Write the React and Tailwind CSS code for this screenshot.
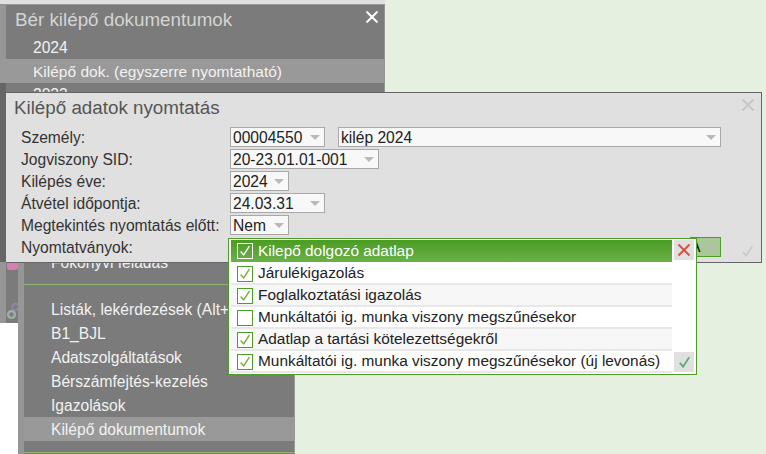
const fields = [
  { label: "Személy:", value: "00004550", width: "w-[95px]" },
  { label: "Jogviszony SID:", value: "20-23.01.01-001", width: "w-[149px]" },
  { label: "Kilépés éve:", value: "2024", width: "w-[59px]" },
  { label: "Átvétel időpontja:", value: "24.03.31", width: "w-[95px]" },
  { label: "Megtekintés nyomtatás előtt:", value: "Nem", width: "w-[59px]" },
];

const forms = [
  { name: "Járulékigazolás", checked: true },
  { name: "Foglalkoztatási igazolás", checked: true, alt: true },
  { name: "Munkáltatói ig. munka viszony megszűnésekor", checked: false },
  { name: "Adatlap a tartási kötelezettségekről", checked: true, alt: true },
  { name: "Munkáltatói ig. munka viszony megszűnésekor (új levonás)", checked: true },
];

const menu = [
  "Listák, lekérdezések (Alt+L)",
  "B1_BJL",
  "Adatszolgáltatások",
  "Bérszámfejtés-kezelés",
  "Igazolások",
];

function Caret() {
  return <span className="w-0 h-0 border-x-[5px] border-x-transparent border-t-[5px] border-t-[#b8b8b8]" />;
}

function Select({ value, width }) {
  return (
    <div className={`${width} h-5 flex items-center justify-between pl-[2px] pr-[4px] border border-[#a8a8a8] bg-[#f8f8f8] text-[#222] leading-[18px]`}>
      <span className="pt-[2px]">{value}</span>
      <Caret />
    </div>
  );
}

function Check({ className, width = 1.6 }) {
  return (
    <svg viewBox="0 0 16 16" className={className} fill="none" stroke="currentColor" strokeWidth={width}>
      <path d="M3 8.5 L6.5 12.5 L13 2.5" />
    </svg>
  );
}

function Cross({ className, width = 2 }) {
  return (
    <svg viewBox="0 0 12 12" className={className} fill="none" stroke="currentColor" strokeWidth={width}>
      <path d="M0.5 0.5 L11.5 11.5 M11.5 0.5 L0.5 11.5" />
    </svg>
  );
}

function FormRow({ name, checked, alt }) {
  return (
    <div className={`h-[22px] flex items-start gap-[5px] pl-[6px] border-b-2 border-[#e8e8e8] ${alt ? "bg-[#f7f7f7]" : "bg-white"}`}>
      <span className="w-4 h-4 mt-[3px] border border-[#4c9e25] bg-white flex items-center justify-center">
        {checked && <Check className="w-[14px] h-[14px] text-[#6cb02a]" />}
      </span>
      <span className="text-[#222] whitespace-nowrap leading-[20px] text-[15.4px]">{name}</span>
    </div>
  );
}

export default function App() {
  return (
    <div className="relative w-[766px] h-[454px] overflow-hidden bg-[#e5f0e1] font-['Liberation_Sans',Arial,sans-serif] text-[15.6px]">
      {/* bal oldali sáv */}
      <div className="absolute left-0 top-0 w-6 h-[454px] bg-white flex">
        <div className="w-[18px] h-[323px] bg-[#969696] flex justify-end">
          <div className="relative w-3 h-[323px] bg-[#7b7b7b]">
            <span className="absolute left-[1px] top-[262px] w-[11px] h-2 rounded-b-[3px] bg-[#d77fb0]" />
            <svg viewBox="0 0 12 18" className="absolute left-0 top-[302px] w-3 h-[18px]" fill="none">
              <circle cx="9.5" cy="5" r="3.2" stroke="#8f86a8" strokeWidth="2" />
              <circle cx="5.5" cy="12.5" r="3.4" stroke="#9fb0ac" strokeWidth="2.4" />
            </svg>
          </div>
        </div>
        <div className="w-[6px] h-[454px] bg-[#969696]" />
      </div>

      {/* menü ablak */}
      <div className="absolute left-6 top-[238px] w-[271px] h-[216px] bg-[#7b7b7b] border-r border-[#999] text-[#f2f2f2] pt-3">
        <div className="h-6 leading-[26px] pl-[27px]">Főkönyvi feladás</div>
        <div className="h-px mt-[10px] bg-[#8cb36f]" />
        <div className="mt-3">
          {menu.map((item) => (
            <div key={item} className="h-6 leading-[26px] pl-[27px] whitespace-nowrap">{item}</div>
          ))}
          <div className="h-6 leading-[26px] pl-[27px] bg-[#999]">Kilépő dokumentumok</div>
        </div>
        <div className="h-px mt-[11px] bg-[#8cb36f]" />
      </div>

      {/* Bér kilépő dokumentumok */}
      <div className="absolute left-0 top-0 w-[385px] h-[92px] overflow-hidden bg-[#969696] border-t-4 border-[#e0e0e0]">
        <div className="ml-[6px] w-[378px] h-[92px] bg-[#7b7b7b] border-t border-[#999] text-[#f2f2f2]">
          <div className="relative h-[30px] pl-[9px] pt-[4px] text-[18.8px] leading-[22px] text-[#d4d4d4]">
            Bér kilépő dokumentumok
            <Cross className="absolute right-[6px] top-[6px] w-3 h-3 text-white" />
          </div>
          <div className="h-6 leading-[26px] pl-[27px]">2024</div>
          <div className="-ml-[6px] w-[384px] h-6 leading-[26px] pl-[33px] bg-[#999] text-[15.5px]">Kilépő dok. (egyszerre nyomtatható)</div>
          <div className="h-6 leading-[24px] pl-[27px]">2023</div>
        </div>
      </div>

      {/* sötét sáv a párbeszédablak mellett */}
      <div className="absolute left-0 top-[83px] w-[6px] h-[179px] bg-[#666]" />

      {/* Kilépő adatok nyomtatás */}
      <div className="absolute left-[6px] top-[92px] w-[756px] h-[171px] bg-[#e0e0e0] border border-l-0 border-[#666] text-[#333]">
        <div className="relative h-[34px] pl-[8px] pt-[4px] text-[18.8px] leading-[22px] text-[#555]">
          Kilépő adatok nyomtatás
          <Cross className="absolute right-[7px] top-[6px] w-3 h-3 text-[#c8c8c8]" />
        </div>
        <div className="flex flex-col gap-[2px]">
          {fields.map((f, i) => (
            <div key={f.label} className="flex items-center h-5 pl-[15px]">
              <span className="w-[209px] whitespace-nowrap leading-[18px] pt-[2px]">{f.label}</span>
              <Select value={f.value} width={f.width} />
              {i === 0 && (
                <div className="ml-[13px]">
                  <Select value="kilép 2024" width="w-[383px]" />
                </div>
              )}
            </div>
          ))}
          <div className="flex items-center h-5 pl-[15px]">
            <span className="leading-[18px] pt-[2px]">Nyomtatványok:</span>
          </div>
        </div>
        <Check width={2} className="absolute right-[6px] bottom-[3px] w-[15px] h-[15px] text-[#ccc]" />
      </div>

      {/* zöld kijelölt mező a lista mögött */}
      <div className="absolute left-[690px] top-[237px] w-[31px] h-5 bg-[#a9c89a] border border-[#4c9e25] flex items-center justify-end pr-[4px] text-black">
        <span className="absolute -left-px">A</span>
        <Caret />
      </div>

      {/* legördülő lista */}
      <div className="absolute left-[228px] top-[238px] w-[469px] h-[137px] bg-white border border-[#4c9e25] pl-[2px] pr-[2px] pt-[1px] flex gap-[2px]">
        <div className="w-[441px]">
          <div className="h-[22px] flex items-center gap-[5px] pl-[6px] bg-gradient-to-b from-[#4a9c22] to-[#6cb048] text-white">
            <span className="w-4 h-4 border border-white flex items-center justify-center">
              <Check className="w-[14px] h-[14px] text-white" />
            </span>
            <span className="leading-[22px] text-[15.4px]">Kilepő dolgozó adatlap</span>
          </div>
          <div className="mt-px">
            {forms.map((f) => (
              <FormRow key={f.name} {...f} />
            ))}
          </div>
        </div>
        <div className="flex flex-col justify-between w-5 h-[132px]">
          <button className="w-5 h-5 bg-[#e0e0e0] flex items-center justify-center">
            <Cross className="w-3 h-3 text-[#d9513a]" />
          </button>
          <button className="w-5 h-5 bg-[#e0e0e0] flex items-center justify-center">
            <Check width={2} className="w-[15px] h-[15px] text-[#5fae7f]" />
          </button>
        </div>
      </div>
    </div>
  );
}
